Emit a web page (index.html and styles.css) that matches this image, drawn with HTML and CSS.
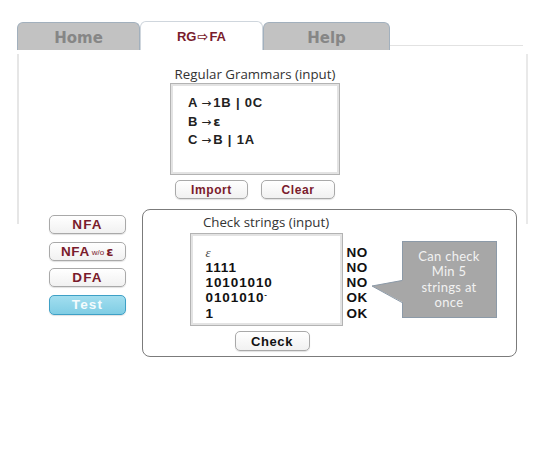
FILE: index.html
```html
<!DOCTYPE html>
<html>
<head>
<meta charset="utf-8">
<link rel="stylesheet" href="styles.css">
</head>
<body>
<div class="page">
  <div class="tabs">
    <div class="tab tab-home">Home</div>
    <div class="tab tab-active">RG<span class="tab-arrow">⇨</span>FA</div>
    <div class="tab tab-help">Help</div>
    <div class="tab-rest"></div>
  </div>
  <div class="panel">
    <div class="grammar">
      <div class="title">Regular Grammars (input)</div>
      <div class="box gbox">
        <div class="gline">A<span class="arr">→</span>1B | 0C</div>
        <div class="gline">B<span class="arr">→</span><span class="eps-b">ε</span></div>
        <div class="gline">C<span class="arr">→</span>B | 1A</div>
      </div>
      <div class="btns">
        <div class="btn btn-red btn-import">Import</div>
        <div class="btn btn-red btn-clear">Clear</div>
      </div>
    </div>
  </div>
  <div class="lower">
    <div class="side">
      <div class="btn btn-red side-btn">NFA</div>
      <div class="btn btn-red side-btn side-wo">NFA<span class="wo">w/o</span><span class="eps-side">ε</span></div>
      <div class="btn btn-red side-btn">DFA</div>
      <div class="btn side-btn btn-test">Test</div>
    </div>
    <div class="check">
      <div class="title check-title">Check strings (input)</div>
      <div class="check-row">
        <div class="box sbox">
          <div class="sline"><span class="eps-i">ε</span></div>
          <div class="sline">1111</div>
          <div class="sline">10101010</div>
          <div class="sline">0101010<sup class="tick">-</sup></div>
          <div class="sline">1</div>
        </div>
        <div class="results">
          <div class="sline">NO</div>
          <div class="sline">NO</div>
          <div class="sline">NO</div>
          <div class="sline">OK</div>
          <div class="sline">OK</div>
        </div>
        <div class="callout">
          <svg class="pointer" width="34" height="26" viewBox="0 0 34 26">
            <polygon points="33,1 1,7 33,24" fill="#a7a7a7"/>
            <polyline points="31,1.5 1,7 31,23.5" fill="none" stroke="#8c9aa8" stroke-width="1"/>
          </svg>
          <div class="callout-text">
            <div class="cline">Can check</div>
            <div class="cline">Min 5</div>
            <div class="cline">strings at</div>
            <div class="cline">once</div>
          </div>
        </div>
      </div>
      <div class="btn btn-check">Check</div>
    </div>
  </div>
</div>
</body>
</html>
```

FILE: styles.css
```css
* { box-sizing: border-box; }
html, body { margin: 0; padding: 0; background: #fff; }
.page { width: 550px; height: 466px; position: relative; }

.tabs {
  display: flex;
  align-items: flex-start;
  padding: 22px 0 0 17px;
  height: 50px;
}
.tab {
  height: 28px;
  display: flex;
  align-items: center;
  justify-content: center;
  font-family: "DejaVu Sans", sans-serif;
  font-weight: bold;
  font-size: 15px;
  color: #868686;
  background: #c2c2c2;
  border: 1px solid #a2b0bd;
  border-bottom: none;
  border-radius: 6px 6px 0 0;
  padding-top: 2px;
}
.tab-home { width: 123px; }
.tab-help { width: 127px; }
.tab-active {
  width: 123px;
  height: 29px;
  margin-top: -1px;
  background: #fff;
  border-color: #cfd6dd;
  color: #7a1b2c;
  font-family: "Liberation Sans", sans-serif;
  font-size: 13px;
  padding-top: 1px;
}
.tab-arrow {
  font-family: "DejaVu Sans", sans-serif;
  font-size: 13px;
  margin: 0 1px;
}
.tab-rest {
  width: 133px;
  height: 24px;
  border-bottom: 1px solid #e2e2e2;
}

.panel {
  margin: 4px 0 0 17px;
  width: 511px;
  height: 170px;
  border-left: 2px solid #e6e6e6;
  border-right: 2px solid #e9e9e9;
}
.grammar {
  margin-left: 151px;
  width: 170px;
  padding-top: 12px;
}
.title {
  font-family: "Open Sans", sans-serif;
  font-size: 13.3px;
  line-height: 16px;
  color: #333;
  text-align: center;
  white-space: nowrap;
}
.box {
  border: 1px solid #b3b3b3;
  box-shadow: inset 0 0 0 2px #e3e3e3;
  background: #fff;
}
.gbox {
  margin-top: 1px;
  height: 92px;
  padding: 10px 0 0 17px;
}
.gline {
  font-family: "Liberation Sans", sans-serif;
  font-weight: bold;
  font-size: 13px;
  letter-spacing: 0.8px;
  line-height: 17.5px;
  color: #222;
  white-space: pre;
}
.arr {
  font-family: "DejaVu Sans", sans-serif;
  font-weight: normal;
  font-size: 12px;
  letter-spacing: 0;
  margin: 0 2px 0 3px;
}
.eps-b {
  font-family: "DejaVu Sans", sans-serif;
  font-weight: bold;
}
.btns {
  display: flex;
  justify-content: center;
  gap: 13px;
  margin-top: 5px;
}
.btn {
  height: 19px;
  display: flex;
  align-items: center;
  justify-content: center;
  font-family: "Liberation Sans", sans-serif;
  font-weight: bold;
  font-size: 12px;
  letter-spacing: 0.6px;
  border: 1px solid #a9a9a9;
  border-radius: 5px;
  background: linear-gradient(#ffffff, #f1f1f1);
  box-shadow: 0 1px 1px rgba(0,0,0,0.12);
}
.btn-red { color: #7a1b2c; }
.btn-import { width: 73px; }
.btn-clear { width: 74px; }

.lower {
  display: flex;
  align-items: flex-start;
  margin-top: -15px;
}
.side {
  margin: 6px 0 0 49px;
  width: 77px;
  display: flex;
  flex-direction: column;
  gap: 7.5px;
}
.side-btn {
  font-size: 13.5px;
  letter-spacing: 1.2px;
}
.side-wo { letter-spacing: 0.6px; }
.wo {
  font-size: 8px;
  letter-spacing: 0;
  margin: 2px 2px 0 2px;
  font-weight: normal;
}
.eps-side {
  font-family: "DejaVu Sans", sans-serif;
  font-size: 13px;
}
.btn-test {
  color: #f4fbfd;
  background: linear-gradient(#a2deef, #80cde4);
  border: 1.5px solid #3ea0c6;
  height: 20px;
}

.check {
  margin-left: 16px;
  width: 375px;
  height: 148px;
  border: 1.5px solid #7b7b7b;
  border-radius: 8px;
  padding: 4px 0 0 46.5px;
}
.check-title {
  width: 153px;
}
.check-row {
  display: flex;
  align-items: flex-start;
  margin-top: 3px;
}
.sbox {
  width: 153px;
  height: 93px;
  padding: 10.5px 0 0 15px;
}
.sline {
  font-family: "Liberation Sans", sans-serif;
  font-weight: bold;
  font-size: 13.5px;
  line-height: 15.25px;
  height: 15.25px;
  color: #111;
  white-space: nowrap;
}
.sbox .sline { letter-spacing: 0.9px; }
.eps-i {
  font-family: "Liberation Serif", serif;
  font-style: italic;
  font-weight: normal;
  font-size: 13px;
  color: #444;
}
.tick {
  font-size: 8px;
  vertical-align: 5px;
  line-height: 0;
}
.results {
  margin-left: 4px;
  width: 26px;
  padding-top: 11.5px;
}
.results .sline { letter-spacing: 0.4px; }
.callout {
  position: relative;
  margin: 8px 0 0 29px;
  width: 95px;
  height: 77px;
  background: #a7a7a7;
  border: 1px solid #8c9aa8;
  display: flex;
  align-items: center;
  justify-content: center;
}
.pointer {
  position: absolute;
  left: -32px;
  top: 37px;
}
.callout-text {
  font-family: Lato, sans-serif;
  font-size: 13px;
  letter-spacing: 0.3px;
  color: #f2f2f2;
  text-align: center;
}
.cline {
  line-height: 15.5px;
  height: 15.5px;
  white-space: nowrap;
}
.btn-check {
  margin: 5px 0 0 45px;
  width: 75px;
  height: 20px;
  color: #111;
  font-size: 13px;
}
```
